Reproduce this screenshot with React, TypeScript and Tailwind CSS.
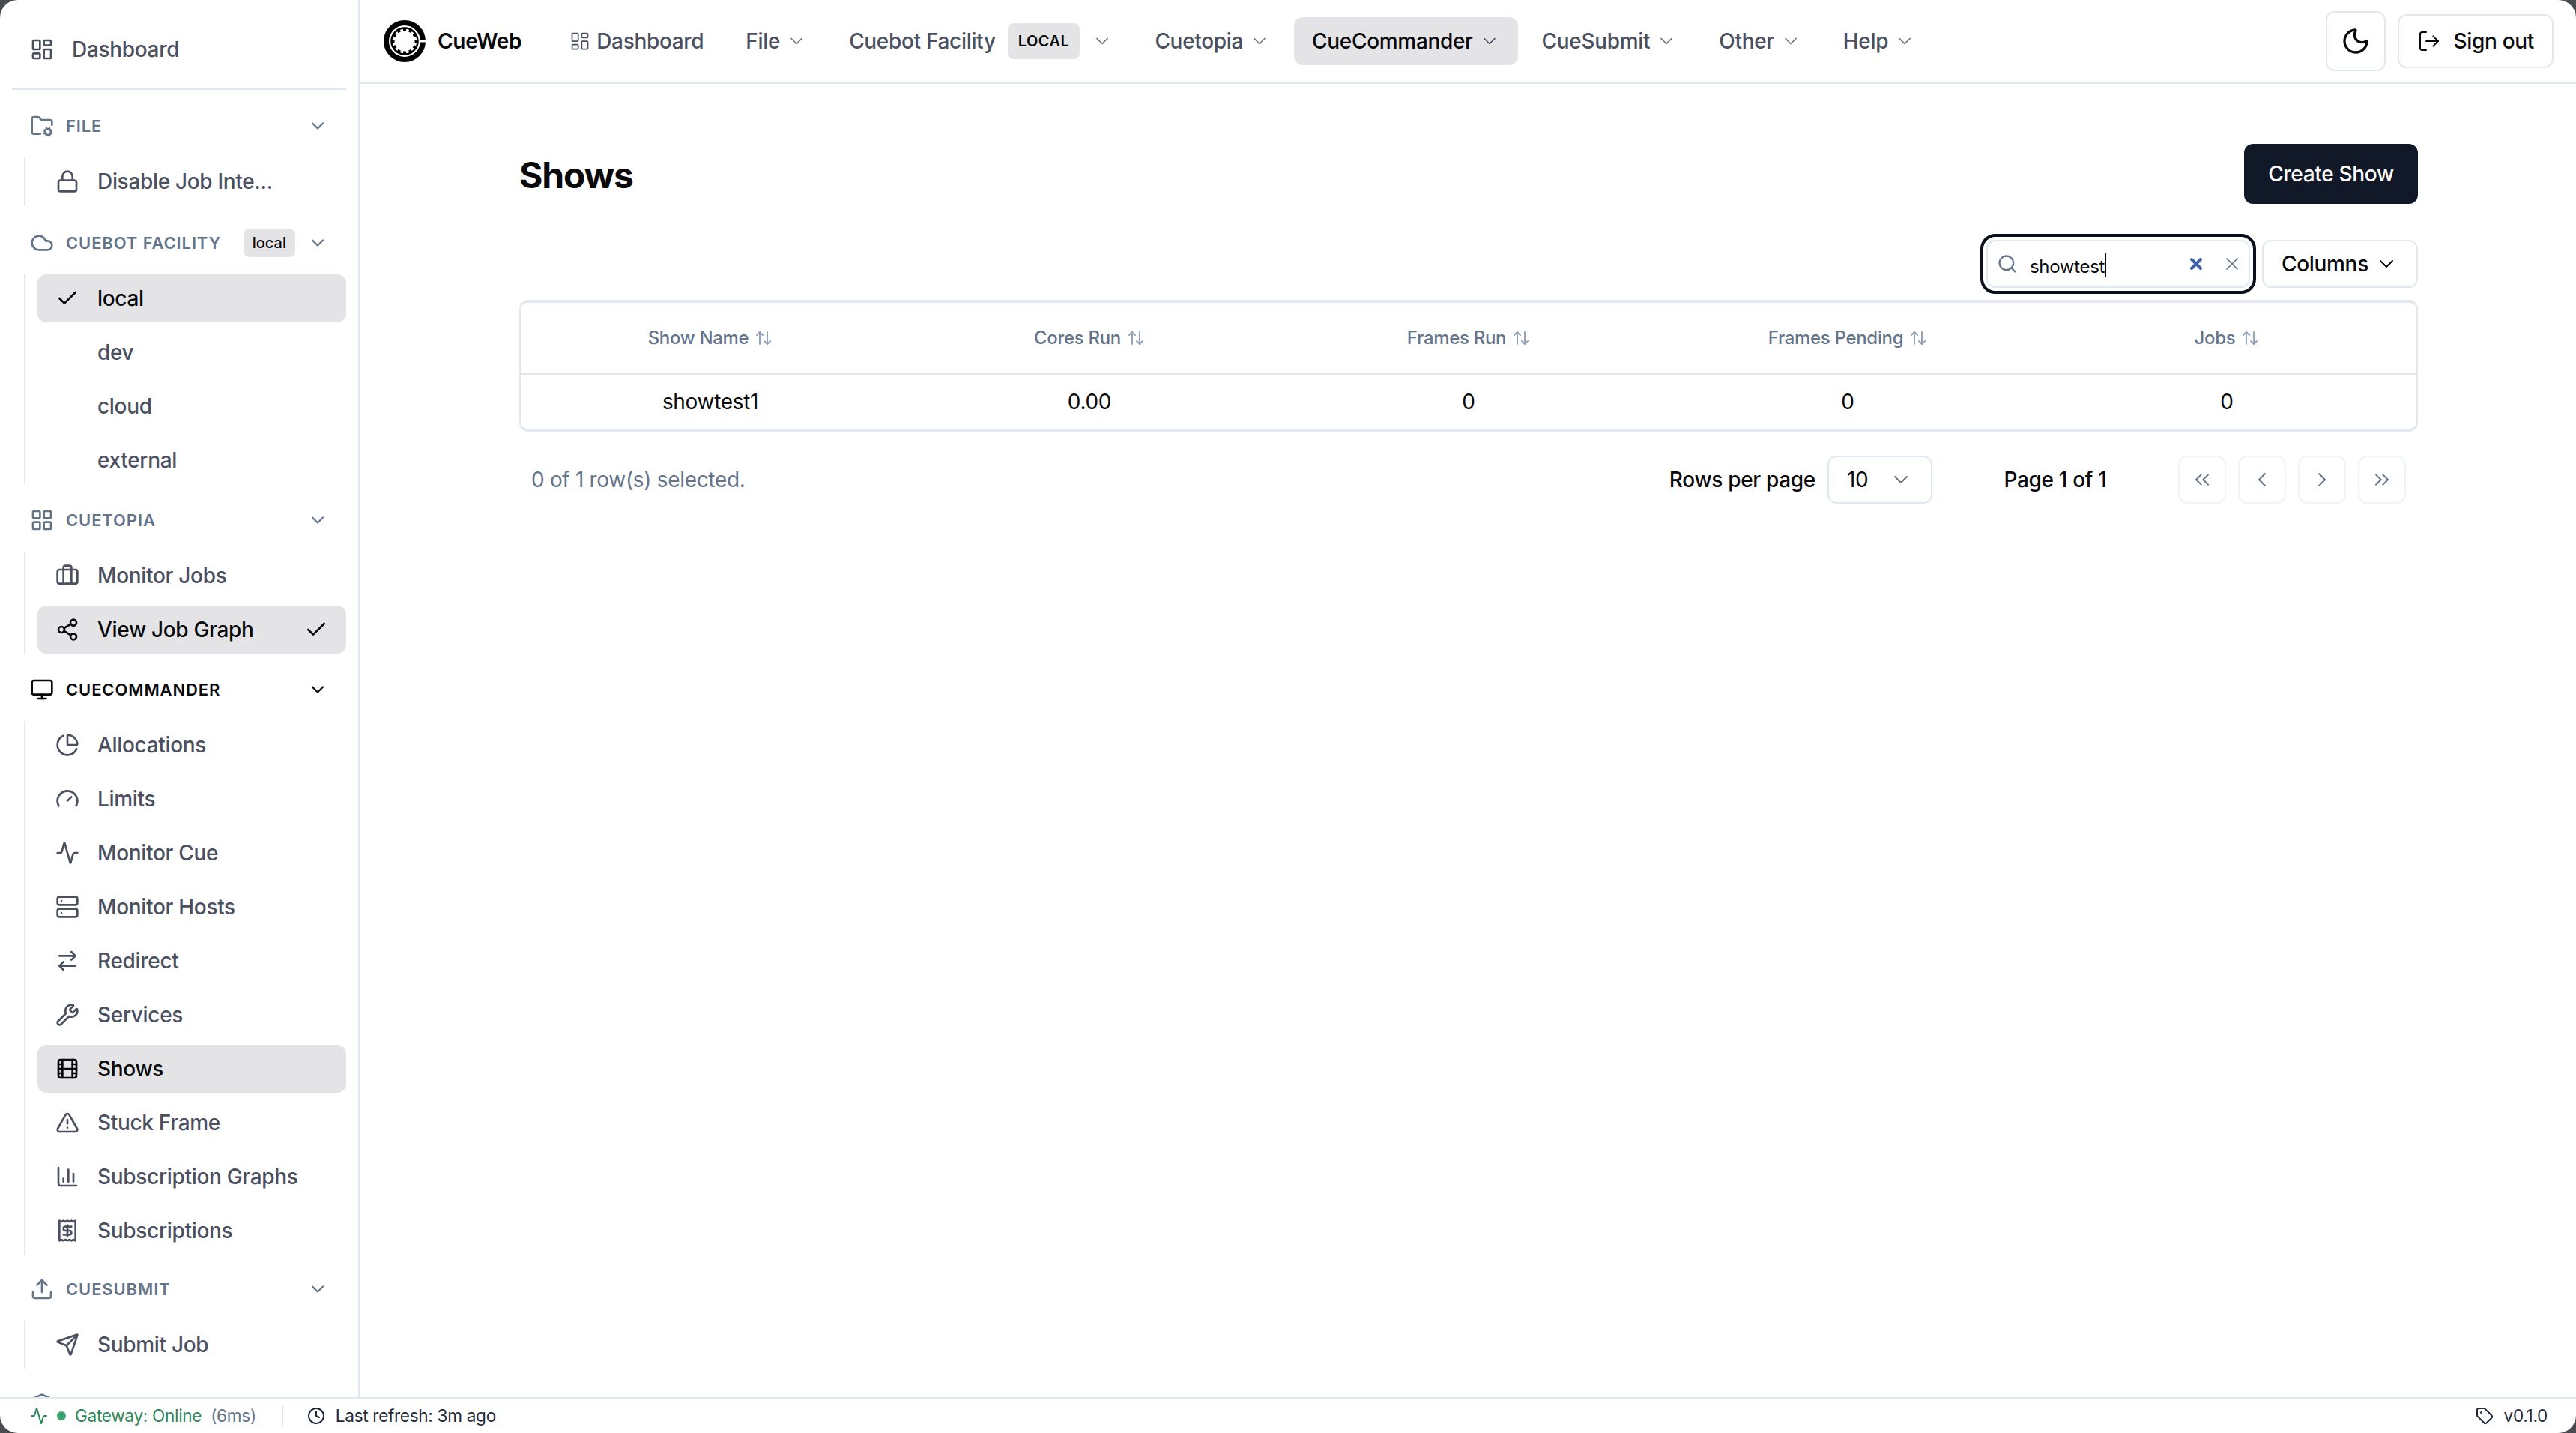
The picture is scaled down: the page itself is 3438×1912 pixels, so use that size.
import type { ReactNode } from "react"
import {
  Activity, ArrowRightLeft, ArrowUpDown, Briefcase, ChartColumn, ChartPie, Check, ChevronDown, ChevronLeft,
  ChevronRight, ChevronsLeft, ChevronsRight, Clock, Cloud, Film, FolderCog, Gauge, Layers, LayoutDashboard,
  LayoutGrid, Lock, LogOut, Monitor, Moon, Receipt, Search, Send, Server, Share2, Tag, TriangleAlert, Upload,
  Wrench, X,
} from "lucide-react"

type Item = { label: string; icon?: typeof Lock; active?: boolean; check?: boolean; checkRight?: boolean }

function Logo() {
  const teeth = Array.from({ length: 12 }, (_, i) => i * 30)
  return (
    <svg viewBox="0 0 56 56" className="h-7 w-7 shrink-0">
      <circle cx="28" cy="28" r="24.5" fill="none" stroke="#000" strokeWidth="7" />
      <rect x="49" y="26.5" width="7" height="3" fill="#fff" />
      <circle cx="28" cy="28" r="17.5" fill="none" stroke="#000" strokeWidth="2.5" />
      {teeth.map((deg) => (
        <rect key={deg} x="26" y="11" width="4" height="3.5" fill="#000" transform={`rotate(${deg} 28 28)`} />
      ))}
    </svg>
  )
}

function SideRow({ item }: { item: Item }) {
  const Icon = item.icon
  return (
    <div
      className={`flex h-8 items-center rounded-md px-3 text-sm ${
        item.active ? "bg-[#e4e4e7] font-medium text-[#09090b]" : "font-medium text-[#4b5060]"
      }`}
    >
      {item.check && <Check className="h-4 w-4" />}
      {Icon && <Icon className="h-4 w-4" />}
      {!Icon && !item.check && <span className="w-4" />}
      <span className="ml-3 flex-1 truncate">{item.label}</span>
      {item.checkRight && <Check className="h-4 w-4" />}
    </div>
  )
}

function SideGroup({
  title, icon: Icon, items, open, badge, className = "mb-2",
}: { title: string; icon: typeof Lock; items: Item[]; open?: boolean; badge?: string; className?: string }) {
  return (
    <div className={`shrink-0 ${className}`}>
      <div
        className={`mx-2 mb-[5px] flex h-8 items-center gap-2 px-3 text-[11px] font-semibold uppercase tracking-[0.04em] ${
          open ? "text-[#09090b]" : "text-[#64748b]"
        }`}
      >
        <Icon className="h-4 w-4 shrink-0" />
        <span className="flex-1 truncate">{title}</span>
        {badge && (
          <span className="rounded bg-[#e4e4e7] px-1.5 py-0.5 text-[10px] font-medium normal-case leading-[15px] tracking-normal text-[#09090b]">
            {badge}
          </span>
        )}
        <ChevronDown className="h-3.5 w-3.5 shrink-0" />
      </div>
      <div className="ml-4 mr-2 flex flex-col gap-1 border-l border-[#e2e8f0] pl-2">
        {items.map((item) => (
          <SideRow key={item.label} item={item} />
        ))}
      </div>
    </div>
  )
}

function Sidebar() {
  return (
    <aside className="flex w-60 shrink-0 flex-col overflow-hidden border-r border-[#e2e8f0] pt-[17px]">
      <div className="mx-2 flex h-8 shrink-0 items-center gap-3 px-3 text-sm font-medium text-[#4b5060]">
        <LayoutDashboard className="h-4 w-4" />
        Dashboard
      </div>
      <div className="mx-2 mb-2 mt-2.5 shrink-0 border-t border-[#e2e8f0]" />
      <SideGroup
        title="File"
        icon={FolderCog}
        className="mb-[9px]"
        items={[{ label: "Disable Job Inte...", icon: Lock }]}
      />
      <SideGroup
        title="Cuebot Facility"
        icon={Cloud}
        badge="local"
        items={[{ label: "local", active: true, check: true }, { label: "dev" }, { label: "cloud" }, { label: "external" }]}
      />
      <SideGroup
        title="Cuetopia"
        icon={LayoutGrid}
        items={[
          { label: "Monitor Jobs", icon: Briefcase },
          { label: "View Job Graph", icon: Share2, active: true, checkRight: true },
        ]}
      />
      <SideGroup
        title="CueCommander"
        icon={Monitor}
        open
        className="mb-[7px]"
        items={[
          { label: "Allocations", icon: ChartPie },
          { label: "Limits", icon: Gauge },
          { label: "Monitor Cue", icon: Activity },
          { label: "Monitor Hosts", icon: Server },
          { label: "Redirect", icon: ArrowRightLeft },
          { label: "Services", icon: Wrench },
          { label: "Shows", icon: Film, active: true },
          { label: "Stuck Frame", icon: TriangleAlert },
          { label: "Subscription Graphs", icon: ChartColumn },
          { label: "Subscriptions", icon: Receipt },
        ]}
      />
      <SideGroup title="CueSubmit" icon={Upload} items={[{ label: "Submit Job", icon: Send }]} />
      {/* next group is scrolled out of view, only the top of its icon shows */}
      <div className="mx-2 flex h-8 shrink-0 items-center px-3 text-[#64748b]">
        <Layers className="h-4 w-4" />
      </div>
    </aside>
  )
}

function NavItem({ label, active, badge }: { label: string; active?: boolean; badge?: string }) {
  return (
    <div
      className={`flex h-8 items-center rounded-md px-3 text-sm font-medium ${
        active ? "bg-[#e4e4e7] text-[#09090b]" : "text-[#4b5060]"
      }`}
    >
      {label}
      {badge && (
        <span className="ml-2 mr-1 flex h-6 items-center rounded bg-[#e4e4e7] px-[7px] text-[10px] font-semibold tracking-wide text-[#09090b]">
          {badge}
        </span>
      )}
      <ChevronDown className={`ml-1 h-3.5 w-3.5 ${active ? "text-[#4b5060]" : "text-[#71717a]"}`} strokeWidth={1.5} />
    </div>
  )
}

function TopBar() {
  return (
    <header className="flex h-14 shrink-0 items-center border-b border-[#e2e8f0] pl-4 pr-[15px]">
      <Logo />
      <span className="ml-2 text-sm font-semibold text-[#09090b]">CueWeb</span>
      <nav className="ml-8 flex items-center gap-1">
        <div className="flex h-8 items-center gap-1 pr-3 text-sm font-medium text-[#4b5060]">
          <LayoutDashboard className="h-3.5 w-3.5" strokeWidth={1.5} />
          Dashboard
        </div>
        <NavItem label="File" />
        <NavItem label="Cuebot Facility" badge="LOCAL" />
        <NavItem label="Cuetopia" />
        <NavItem label="CueCommander" active />
        <NavItem label="CueSubmit" />
        <NavItem label="Other" />
        <NavItem label="Help" />
      </nav>
      <div className="ml-auto flex items-center gap-2">
        <button className="flex h-10 w-10 items-center justify-center rounded-md border border-[#e2e8f0] text-[#09090b]">
          <Moon className="h-5 w-5" />
        </button>
        <button className="flex h-9 items-center gap-2 rounded-md border border-[#e2e8f0] px-3 text-sm font-medium text-[#09090b]">
          <LogOut className="h-4 w-4" strokeWidth={1.5} />
          Sign out
        </button>
      </div>
    </header>
  )
}

function Toolbar() {
  return (
    <div className="mt-6 flex items-center justify-end gap-2">
      <div className="flex h-8 w-[176px] items-center rounded-md border border-[#e2e8f0] pl-1.5 pr-1 outline-2 outline-offset-2 outline-[#0a0f1e]">
        <Search className="h-3.5 w-3.5 shrink-0 text-[#64748b]" />
        <span className="ml-2 flex-1 text-xs text-[#09090b]">
          showtest<span className="inline-block h-4 w-px translate-y-[3px] bg-[#09090b] align-baseline" />
        </span>
        <X className="h-3 w-3 shrink-0 text-[#3f5fa8]" strokeWidth={4} />
        <X className="ml-[11px] h-3.5 w-3.5 shrink-0 text-[#64748b]" strokeWidth={1.5} />
      </div>
      <button className="flex h-8 w-[104px] items-center justify-between rounded-md border border-[#e2e8f0] px-3 text-sm font-medium text-[#09090b]">
        Columns
        <ChevronDown className="h-4 w-4" strokeWidth={1.5} />
      </button>
    </div>
  )
}

const columns = ["Show Name", "Cores Run", "Frames Run", "Frames Pending", "Jobs"]
const row = ["showtest1", "0.00", "0", "0", "0"]

function ShowsTable() {
  return (
    <div className="mt-2 overflow-hidden rounded-md border-x border-y-2 border-[#e2e8f0]">
      <div className="grid h-12 grid-cols-5 items-center border-b border-[#e2e8f0]">
        {columns.map((col) => (
          <div key={col} className="flex items-center justify-center text-xs font-medium text-[#64748b]">
            {col}
            <ArrowUpDown className="ml-1 h-3 w-3 text-[#94a3b8]" />
          </div>
        ))}
      </div>
      <div className="grid h-9 grid-cols-5 items-center">
        {row.map((cell, i) => (
          <div key={i} className="text-center text-sm text-[#09090b]">
            {cell}
          </div>
        ))}
      </div>
    </div>
  )
}

function PageButton({ children }: { children: ReactNode }) {
  return (
    <button className="flex h-8 w-8 items-center justify-center rounded-md border border-[#e2e8f0]/50 text-[#64748b]">
      {children}
    </button>
  )
}

function Pagination() {
  return (
    <div className="mt-4 flex items-center justify-between px-2">
      <div className="text-sm text-[#64748b]">0 of 1 row(s) selected.</div>
      <div className="flex items-center">
        <span className="mr-2 text-sm font-medium text-[#09090b]">Rows per page</span>
        <div className="flex h-8 w-[70px] items-center justify-between rounded-md border border-[#e2e8f0] px-3 text-sm text-[#09090b]">
          10
          <ChevronDown className="h-4 w-4 text-[#71717a]" strokeWidth={1.5} />
        </div>
        <div className="mx-8 w-[100px] text-center text-sm font-medium text-[#09090b]">Page 1 of 1</div>
        <div className="flex items-center gap-2">
          <PageButton><ChevronsLeft className="h-4 w-4" strokeWidth={1.5} /></PageButton>
          <PageButton><ChevronLeft className="h-4 w-4" strokeWidth={1.5} /></PageButton>
          <PageButton><ChevronRight className="h-4 w-4" strokeWidth={1.5} /></PageButton>
          <PageButton><ChevronsRight className="h-4 w-4" strokeWidth={1.5} /></PageButton>
        </div>
      </div>
    </div>
  )
}

function StatusBar() {
  return (
    <footer className="flex h-6 shrink-0 items-center border-t border-[#e2e8f0] pl-5 pr-[19px] text-[11.3px] text-[#1f2937]">
      <Activity className="h-3 w-3 text-[#2f855a]" />
      <span className="ml-1.5 h-1.5 w-1.5 rounded-full bg-[#3ba36f]" />
      <span className="ml-1.5 text-[#2f855a]">Gateway: Online</span>
      <span className="ml-1.5 text-[#64748b]">(6ms)</span>
      <span className="ml-[17px] h-3.5 w-px bg-[#e2e8f0]" />
      <Clock className="ml-4 h-3 w-3" />
      <span className="ml-[7px]">Last refresh: 3m ago</span>
      <Tag className="ml-auto h-3 w-3" />
      <span className="ml-[7px]">v0.1.0</span>
    </footer>
  )
}

export default function App() {
  return (
    <div className="h-[956px] w-[1719px] overflow-hidden bg-[#4a4b50] font-['Inter',sans-serif] tracking-[-0.01em] [zoom:2]">
      <div className="flex h-full flex-col overflow-hidden rounded-xl bg-white">
        <div className="flex min-h-0 flex-1">
          <Sidebar />
          <div className="flex min-w-0 flex-1 flex-col">
            <TopBar />
            <main className="ml-[106.5px] w-[1267px] pt-10">
              <div className="flex items-center justify-between">
                <h1 className="pt-0.5 text-2xl font-bold tracking-tight text-[#09090b]">Shows</h1>
                <button className="flex h-10 w-[116px] items-center justify-center rounded-md bg-[#111827] text-sm font-medium text-white">
                  Create Show
                </button>
              </div>
              <Toolbar />
              <ShowsTable />
              <Pagination />
            </main>
          </div>
        </div>
        <StatusBar />
      </div>
    </div>
  )
}
